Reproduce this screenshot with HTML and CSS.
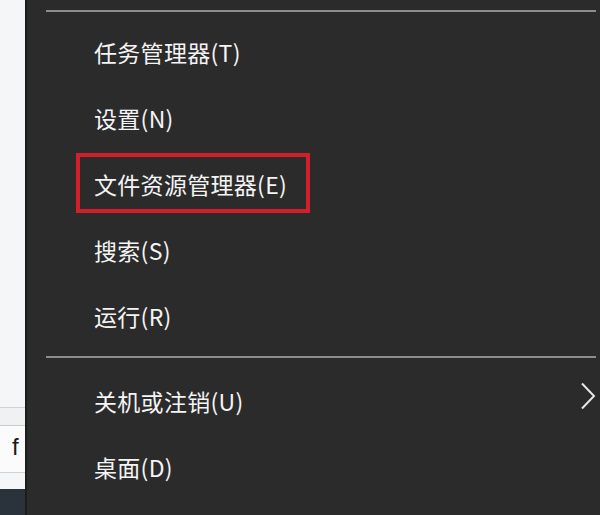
FILE: index.html
```
<!DOCTYPE html>
<html lang="zh-CN">
<head>
<meta charset="utf-8">
<title>Win+X 菜单</title>
<link rel="stylesheet" href="styles.css">
</head>
<body>
<div class="screen">
  <aside class="side">
    <div class="side-top"></div>
    <div class="side-row side-row-a"></div>
    <div class="side-row side-row-b"><span class="side-text">f</span></div>
    <div class="side-rest"></div>
    <div class="side-task"></div>
  </aside>
  <nav class="menu">
    <div class="sep sep-top"></div>
    <ul class="group">
      <li class="item">任务管理器(T)</li>
      <li class="item">设置(N)</li>
      <li class="item item-marked">文件资源管理器(E)<span class="mark"></span></li>
      <li class="item">搜索(S)</li>
      <li class="item">运行(R)</li>
    </ul>
    <div class="sep sep-mid"></div>
    <ul class="group">
      <li class="item item-sub">关机或注销(U)
        <svg class="chev" width="16" height="28" viewBox="0 0 16 28"><polyline points="2,1.5 14,14 2,26.5" fill="none" stroke="#e6e6e6" stroke-width="2"/></svg>
      </li>
      <li class="item">桌面(D)</li>
    </ul>
  </nav>
</div>
</body>
</html>
```
FILE: styles.css
```
html, body {
  margin: 0;
  padding: 0;
  background: #2b2b2b;
}
.screen {
  display: flex;
  width: 600px;
  height: 515px;
  overflow: hidden;
}
.side {
  width: 25px;
  flex: none;
  display: flex;
  flex-direction: column;
  background: #f5f6f8;
}
.side-top {
  height: 408px;
  border-bottom: 1px solid #cfd1d4;
  box-sizing: border-box;
}
.side-row-a {
  height: 18px;
  background: #f0f1f3;
  border-bottom: 1px solid #c9cbce;
  box-sizing: border-box;
}
.side-row-b {
  height: 47px;
  background: #fbfbfb;
  border-bottom: 1px solid #cfd1d4;
  box-sizing: border-box;
  overflow: hidden;
  white-space: nowrap;
}
.side-text {
  display: block;
  padding: 7px 0 0 12px;
  font-family: "Liberation Sans", sans-serif;
  font-size: 24px;
  line-height: 28px;
  color: #1a1a1a;
}
.side-rest {
  height: 16px;
  background: #f5f6f8;
}
.side-task {
  flex: 1;
  background: #2a323c;
}
.menu {
  flex: 1;
  background: #2b2b2b;
  border-left: 2px solid #1c1c1c;
  padding-top: 10px;
  font-family: "Noto Sans CJK SC", "Noto Sans", sans-serif;
}
.sep {
  height: 2px;
  background: #8c8c8c;
  margin: 0 4px 0 19px;
}
.sep-top {
  margin-bottom: 7px;
}
.sep-mid {
  margin-top: 7px;
  margin-bottom: 10px;
}
.group {
  list-style: none;
  margin: 0;
  padding: 0;
}
.item {
  position: relative;
  height: 66px;
  display: flex;
  align-items: center;
  padding-left: 67px;
  font-size: 23px;
  color: #f4f4f4;
  letter-spacing: 0.3px;
}
.mark {
  position: absolute;
  left: 49px;
  top: 2px;
  width: 234px;
  height: 60px;
  box-sizing: border-box;
  border: 4px solid #d21f2b;
}
.chev {
  position: absolute;
  right: 4px;
  top: 14px;
}
```
